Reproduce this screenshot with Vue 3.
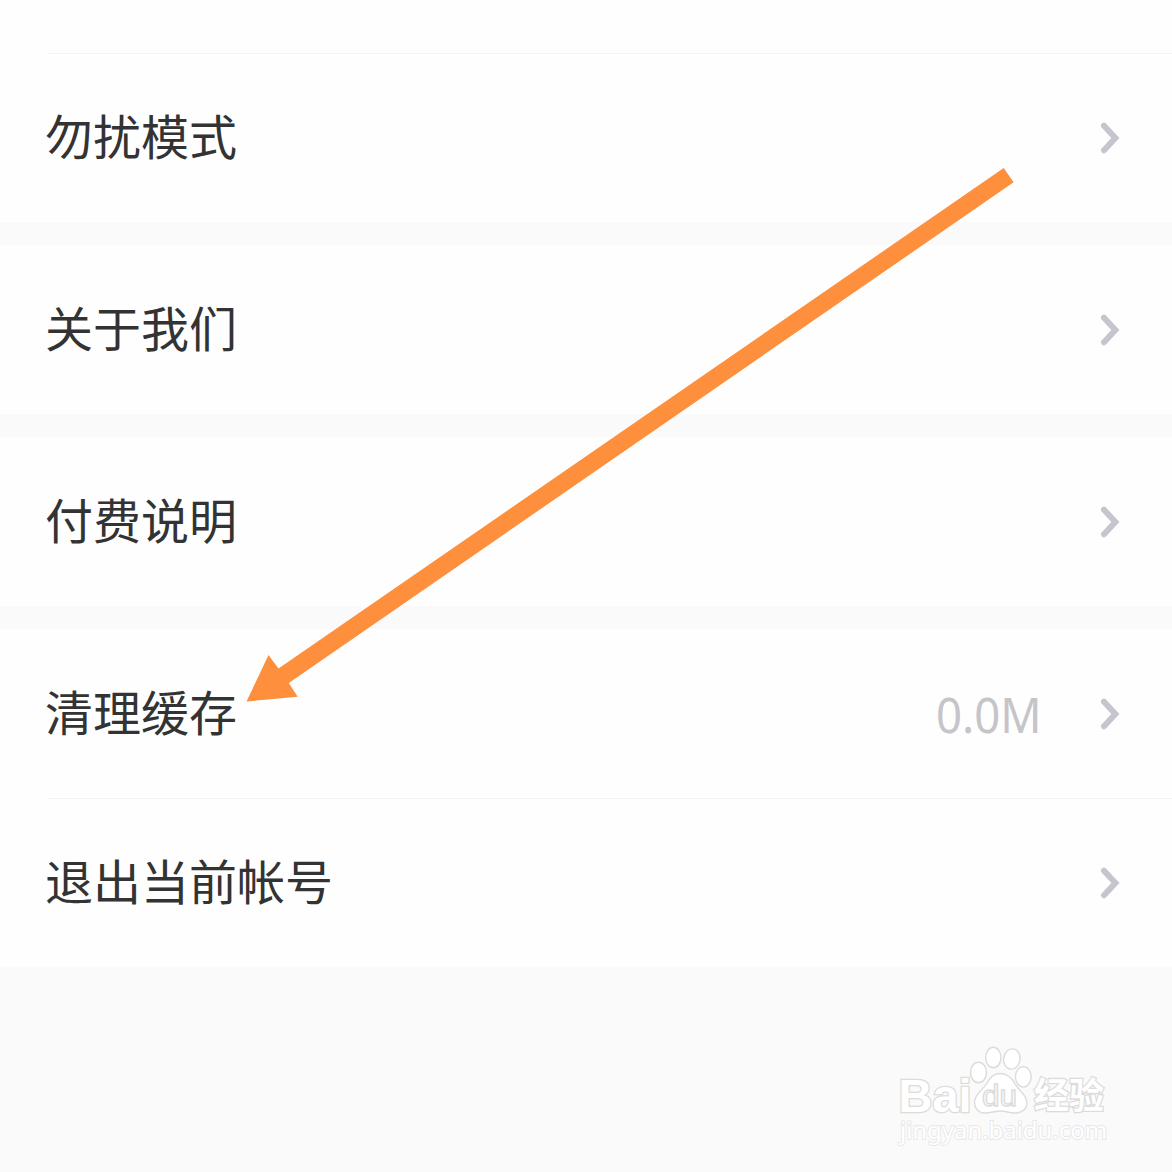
<script setup>
const groups = [
  [{ label: '勿扰模式' }],
  [{ label: '关于我们' }],
  [{ label: '付费说明' }],
  [{ label: '清理缓存', value: '0.0M' }, { label: '退出当前帐号' }],
]
</script>

<template>
  <main class="settings">
    <div class="top"></div>
    <section v-for="(group, i) in groups" :key="i" class="group">
      <div v-for="row in group" :key="row.label" class="row">
        <span class="label">{{ row.label }}</span>
        <span v-if="row.value" class="value">{{ row.value }}</span>
        <svg class="chevron" width="22" height="34" viewBox="0 0 22 34">
          <path d="M4 4.8 L15.4 17 L4 29.2" />
        </svg>
      </div>
    </section>

    <svg class="arrow" width="1172" height="1172" viewBox="0 0 1172 1172">
      <polygon points="246.5,701.5 268.5,655 278.5,668.5 1003.7,168 1013.6,182.3 288.8,683 297.7,696.8" />
    </svg>

    <svg class="watermark" width="230" height="120" viewBox="890 1035 230 120">
      <g class="mark">
        <text class="brand" x="898.5" y="1112" textLength="73" lengthAdjust="spacingAndGlyphs">Bai</text>
        <ellipse cx="978.5" cy="1072.5" rx="8" ry="10.2" />
        <ellipse cx="993.3" cy="1057.5" rx="7.7" ry="10.3" />
        <ellipse cx="1011.8" cy="1059" rx="8.2" ry="10.2" transform="rotate(8 1011.8 1059)" />
        <ellipse cx="1023.3" cy="1076.8" rx="7.9" ry="10.2" />
        <path d="M1000.5 1073.5 C1007 1073.5 1012 1078 1015 1084 C1019 1091 1027 1095 1027 1103 C1027 1109 1022 1113 1015 1113 C1009 1113 1006 1111 1000.5 1111 C995 1111 991 1113 985 1113 C978 1113 974.5 1108 974.5 1102 C974.5 1094 983 1090 987 1083 C990 1077 994 1073.5 1000.5 1073.5 Z" />
        <text class="du" x="982" y="1106" textLength="35" lengthAdjust="spacingAndGlyphs">du</text>
        <text class="cn" x="1034" y="1108.5" textLength="70" lengthAdjust="spacingAndGlyphs">经验</text>
        <text class="url" x="900" y="1139" textLength="207" lengthAdjust="spacingAndGlyphs">jingyan.baidu.com</text>
      </g>
    </svg>
  </main>
</template>

<style>
body {
  margin: 0;
  background: #fafafa;
}
</style>

<style scoped>
.settings {
  height: 1172px;
  position: relative;
  overflow: hidden;
  background: #fafafa;
  font-family: "Noto Sans CJK SC", sans-serif;
}
.top {
  height: 53px;
  background: #fefefe;
}
.group {
  background: #fefefe;
  margin-bottom: 23px;
}
.row {
  display: flex;
  align-items: center;
  box-sizing: border-box;
  height: 169px;
  padding: 0 50px 0 45px;
}
.group:nth-child(2) .row,
.row + .row {
  background: linear-gradient(#f3f3f3, #f3f3f3) 48px 0 / 100% 1px no-repeat;
}
.label {
  flex: 1;
  padding-bottom: 7px;
  color: #333;
  font-size: 48px;
  line-height: 72px;
}
.value {
  margin-right: 58px;
  color: #c5c5c9;
  font-family: "Noto Sans", sans-serif;
  font-size: 49px;
  line-height: 72px;
  transform: scaleX(0.93);
  transform-origin: right center;
}
.chevron {
  flex: none;
}
.chevron path {
  fill: none;
  stroke: #c6c5ce;
  stroke-width: 6;
  stroke-linecap: round;
  stroke-linejoin: miter;
}
.arrow {
  position: absolute;
  left: 0;
  top: 0;
  fill: #fe8f3c;
}
.watermark {
  position: absolute;
  left: 890px;
  top: 1035px;
}
.mark {
  fill: #fff;
  stroke: #dcdcdc;
  stroke-width: 1.4;
}
.brand {
  font: bold 47px "Liberation Sans", sans-serif;
  paint-order: stroke;
  stroke-width: 2.6;
}
.du {
  font: 29px "Liberation Sans", sans-serif;
}
.cn {
  font: bold 36px "Noto Sans CJK SC", sans-serif;
  paint-order: stroke;
  stroke-width: 2.6;
}
.url {
  font: 24px "Noto Sans", sans-serif;
  paint-order: stroke;
  stroke: #e7e7e7;
  stroke-width: 1.8;
}
</style>
